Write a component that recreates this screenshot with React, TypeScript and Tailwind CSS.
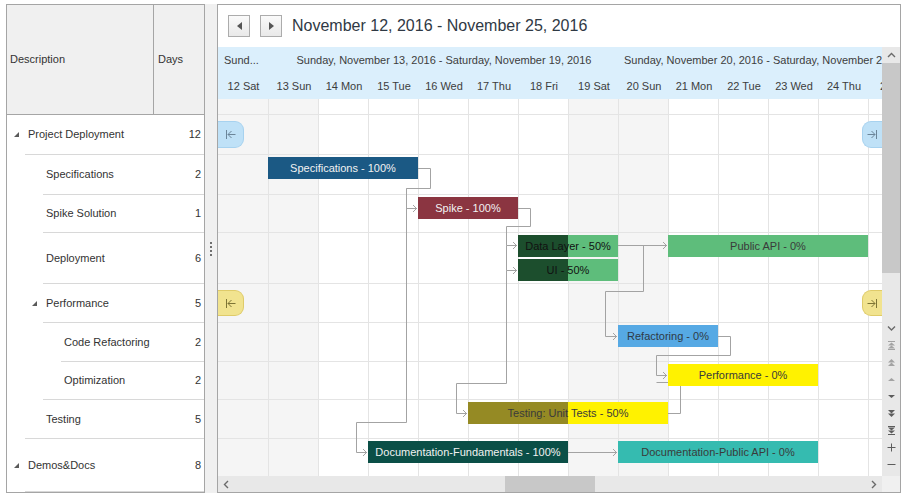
import React from 'react';

type TreeRow = { name: string; days: number; group?: boolean; h: string; pad: string; line: string };

const TREE: TreeRow[] = [
  { name: 'Project Deployment', days: 12, group: true, h: 'h-[40px]', pad: 'pl-[7px]', line: 'ml-[18px]' },
  { name: 'Specifications', days: 2, h: 'h-[40px]', pad: 'pl-[39px]', line: 'ml-[36px]' },
  { name: 'Spike Solution', days: 1, h: 'h-[38px]', pad: 'pl-[39px]', line: 'ml-[36px]' },
  { name: 'Deployment', days: 6, h: 'h-[51px]', pad: 'pl-[39px]', line: 'ml-[36px]' },
  { name: 'Performance', days: 5, group: true, h: 'h-[39px]', pad: 'pl-[25px]', line: 'ml-[36px]' },
  { name: 'Code Refactoring', days: 2, h: 'h-[39px]', pad: 'pl-[57px]', line: 'ml-[54px]' },
  { name: 'Optimization', days: 2, h: 'h-[38px]', pad: 'pl-[57px]', line: 'ml-[36px]' },
  { name: 'Testing', days: 5, h: 'h-[39px]', pad: 'pl-[39px]', line: 'ml-[18px]' },
  { name: 'Demos&Docs', days: 8, group: true, h: 'flex-1', pad: 'pl-[7px]', line: 'ml-[18px]' },
];

const CHART_ROWS = ['h-[16px]', 'h-[40px]', 'h-[40px]', 'h-[38px]', 'h-[51px]', 'h-[39px]', 'h-[39px]', 'h-[38px]', 'h-[39px]'];

const DAYS = [
  { label: '12 Sat', off: true },
  { label: '13 Sun', off: true },
  { label: '14 Mon' },
  { label: '15 Tue' },
  { label: '16 Wed' },
  { label: '17 Thu' },
  { label: '18 Fri' },
  { label: '19 Sat', off: true },
  { label: '20 Sun', off: true },
  { label: '21 Mon' },
  { label: '22 Tue' },
  { label: '23 Wed' },
  { label: '24 Thu' },
  { label: '25 Fri' },
];

type Bar = { text: string; x: number; y: number; w: number; bg: string; fg: string; done?: string };

// absolute page coords, shifted into the chart canvas (origin 218, 99)
const BARS: Bar[] = [
  { text: 'Specifications - 100%', x: 268, y: 157, w: 150, bg: '#1b5984', fg: '#f2f2f2' },
  { text: 'Spike - 100%', x: 418, y: 197, w: 100, bg: '#8b3541', fg: '#f2f2f2' },
  { text: 'Data Layer - 50%', x: 518, y: 235, w: 100, bg: '#5ebd7b', done: '#1c4e2d', fg: '#111111' },
  { text: 'UI - 50%', x: 518, y: 259, w: 100, bg: '#5ebd7b', done: '#1c4e2d', fg: '#111111' },
  { text: 'Public API - 0%', x: 668, y: 235, w: 200, bg: '#5ebd7b', fg: '#3a3a3a' },
  { text: 'Refactoring - 0%', x: 618, y: 325, w: 100, bg: '#56a9e4', fg: '#2f3a46' },
  { text: 'Performance - 0%', x: 668, y: 364, w: 150, bg: '#fff200', fg: '#3a3a3a' },
  { text: 'Testing: Unit Tests - 50%', x: 468, y: 402, w: 200, bg: '#fff200', done: '#958a24', fg: '#3a3a3a' },
  { text: 'Documentation-Fundamentals - 100%', x: 368, y: 441, w: 200, bg: '#0b4f47', fg: '#f2f2f2' },
  { text: 'Documentation-Public API - 0%', x: 618, y: 441, w: 200, bg: '#35bbb0', fg: '#3a3a3a' },
];

const LINKS = [
  'M418 168.5 H430.5 V188.5 H406.5 V208.5 H417',
  'M406.5 188.5 V422.5 H356.5 V452.5 H367',
  'M518 208.5 H530.5 V226.5 H506.5 V245.5 H517',
  'M506.5 245.5 V270.5 H517',
  'M506.5 270.5 V383.5 H456.5 V413.5 H467',
  'M618 245.5 H667',
  'M643.5 245.5 V291.5 H605.5 V336.5 H617',
  'M718 336.5 H730.5 V355.5 H656.5 V375.5 H667',
  'M668 413.5 H680.5 V382.5 H656.5',
  'M568 452.5 H617',
];

const ARROWS: [number, number][] = [
  [418, 208.5], [368, 452.5], [518, 245.5], [518, 270.5], [468, 413.5],
  [668, 245.5], [618, 336.5], [668, 375.5], [618, 452.5],
];

const Tri = () => (
  <svg width="5" height="5" viewBox="0 0 5 5" className="shrink-0">
    <polygon points="5,0 5,5 0,5" fill="#5a5a5a" />
  </svg>
);

const NavBtn = ({ dir }: { dir: 'l' | 'r' }) => (
  <div className="w-[22px] h-[22px] border border-[#acacac] bg-gradient-to-b from-[#fafafa] to-[#e9e9e9] flex items-center justify-center">
    <svg width="5" height="8" viewBox="0 0 5 8">
      {dir === 'l' ? <polygon points="5,0 5,8 0,4" fill="#555" /> : <polygon points="0,0 0,8 5,4" fill="#555" />}
    </svg>
  </div>
);

const GoStart = ({ color }: { color: string }) => (
  <svg width="11" height="9" viewBox="0 0 11 9" fill="none" stroke={color}>
    <path d="M1.5 0 V9" />
    <path d="M3 4.5 H10.5 M6.5 1 L3 4.5 L6.5 8" />
  </svg>
);

const GoEnd = ({ color }: { color: string }) => (
  <svg width="11" height="9" viewBox="0 0 11 9" fill="none" stroke={color}>
    <path d="M9.5 0 V9" />
    <path d="M0.5 4.5 H8 M4.5 1 L8 4.5 L4.5 8" />
  </svg>
);

const Marker = ({ side, top, h, bg, border, icon }: { side: 'l' | 'r'; top: string; h: string; bg: string; border: string; icon: string }) =>
  side === 'l' ? (
    <div className={`absolute left-0 ${top} ${h} w-[26px] rounded-r-[9px] border border-l-0 ${bg} ${border} flex items-center justify-center`}>
      <GoStart color={icon} />
    </div>
  ) : (
    <div className={`absolute left-[644px] ${top} ${h} w-[20px] rounded-l-[9px] border border-r-0 ${bg} ${border} flex items-center justify-center`}>
      <GoEnd color={icon} />
    </div>
  );

const light = '#a3a3a3';
const dark = '#5c5c5c';

const ScrollIcon = ({ kind }: { kind: string }) => {
  const c = ['top', 'pgup', 'up'].includes(kind) ? light : dark;
  return (
    <div className="h-[17px] flex items-center justify-center">
      <svg width="9" height="9" viewBox="0 0 9 9">
        {kind === 'down1' && <polyline points="1,2.5 4.5,6 8,2.5" fill="none" stroke="#6a6a6a" strokeWidth="1.4" />}
        {kind === 'top' && (
          <g fill={c}>
            <rect x="1" y="0" width="7" height="1" />
            <polygon points="4.5,1.5 8,4.5 1,4.5" />
            <polygon points="4.5,4.5 8,7.5 1,7.5" />
            <rect x="1" y="8" width="7" height="1" />
          </g>
        )}
        {kind === 'pgup' && (
          <g fill={c}>
            <polygon points="4.5,1 8,4.5 1,4.5" />
            <polygon points="4.5,4.5 8,8 1,8" />
          </g>
        )}
        {kind === 'up' && <polygon points="4.5,3 8,6 1,6" fill={c} />}
        {kind === 'down' && <polygon points="1,3 8,3 4.5,6" fill={c} />}
        {kind === 'pgdn' && (
          <g fill={c}>
            <polygon points="1,1 8,1 4.5,4.5" />
            <polygon points="1,4.5 8,4.5 4.5,8" />
          </g>
        )}
        {kind === 'bottom' && (
          <g fill={c}>
            <rect x="1" y="0" width="7" height="1" />
            <polygon points="1,1.5 8,1.5 4.5,4.5" />
            <polygon points="1,4.5 8,4.5 4.5,7.5" />
            <rect x="1" y="8" width="7" height="1" />
          </g>
        )}
        {kind === 'plus' && <path d="M0.5 4.5 H8.5 M4.5 0.5 V8.5" stroke={c} />}
        {kind === 'minus' && <path d="M0.5 4.5 H8.5" stroke={c} />}
      </svg>
    </div>
  );
};

const App: React.FC = () => {
  return (
    <div className="w-[906px] h-[501px] bg-white flex items-start pt-[4px] pl-[6px] font-['Liberation_Sans','Arial',sans-serif] text-[11px] text-[#333]">
      {/* Tree list */}
      <div className="w-[199px] h-[489px] border border-[#a5a5a5] flex flex-col shrink-0 bg-white">
        <div className="h-[110px] shrink-0 flex bg-[#f0f0f0] border-b border-[#a5a5a5]">
          <div className="w-[147px] border-r border-[#a5a5a5] flex items-center pl-[3px]">Description</div>
          <div className="flex-1 flex items-center pl-[4px]">Days</div>
        </div>
        {TREE.map((r) => (
          <div key={r.name} className={`flex flex-col shrink-0 ${r.h}`}>
            <div className={`flex-1 flex items-center pr-[3px] ${r.pad}`}>
              {r.group && <Tri />}
              <span className={r.group ? 'ml-[9px]' : ''}>{r.name}</span>
              <span className="ml-auto">{r.days}</span>
            </div>
            <div className={`h-px bg-[#d8d8d8] ${r.line}`} />
          </div>
        ))}
      </div>

      {/* Splitter */}
      <div className="w-[12px] h-[489px] bg-[#f0f0f0] flex flex-col items-center justify-center gap-[2px] shrink-0">
        <div className="w-[2px] h-[2px] bg-[#6e6e6e]" />
        <div className="w-[2px] h-[2px] bg-[#6e6e6e]" />
        <div className="w-[2px] h-[2px] bg-[#6e6e6e]" />
        <div className="w-[2px] h-[2px] bg-[#6e6e6e]" />
      </div>

      {/* Gantt */}
      <div className="w-[684px] h-[489px] border border-[#a5a5a5] flex flex-col shrink-0 bg-white">
        <div className="h-[42px] shrink-0 flex items-center pl-[10px] gap-[10px]">
          <NavBtn dir="l" />
          <NavBtn dir="r" />
          <span className="text-[16px] text-[#2f3944]">November 12, 2016 - November 25, 2016</span>
        </div>

        <div className="flex h-[445px]">
          <div className="w-[664px] flex flex-col">
            {/* Timescale */}
            <div className="h-[52px] bg-[#dbeffc] flex flex-col overflow-hidden text-[#3d3d3d]">
              <div className="h-[26px] flex items-center whitespace-nowrap">
                <div className="w-[51px] shrink-0 pl-[6px]">Sund...</div>
                <div className="w-[350px] shrink-0 text-center">Sunday, November 13, 2016 - Saturday, November 19, 2016</div>
                <div className="shrink-0 pl-[5px]">Sunday, November 20, 2016 - Saturday, November 26, 2016</div>
              </div>
              <div className="h-[26px] flex items-center whitespace-nowrap">
                {DAYS.map((d, i) => (
                  <div key={d.label} className={`shrink-0 text-center ${i === 0 ? 'w-[51px]' : 'w-[50px]'}`}>{d.label}</div>
                ))}
              </div>
            </div>

            {/* Chart canvas */}
            <div className="h-[377px] relative overflow-hidden">
              <div className="flex h-full">
                {DAYS.map((d, i) => (
                  <div
                    key={d.label}
                    className={`shrink-0 h-full border-r border-[#e4e4e4] ${i === 0 ? 'w-[51px]' : 'w-[50px]'} ${d.off ? 'bg-[#f5f5f5]' : 'bg-white'}`}
                  />
                ))}
              </div>
              <div className="absolute inset-0 flex flex-col">
                {CHART_ROWS.map((h, i) => (
                  <div key={i} className={`${h} shrink-0 border-b border-[#e4e4e4]`} />
                ))}
              </div>

              <svg className="absolute left-0 top-0" width="664" height="377">
                <g transform="translate(-218 -99)" fill="none" stroke="#a3a3a3">
                  {LINKS.map((d) => (
                    <path key={d} d={d} />
                  ))}
                  {ARROWS.map(([x, y]) => (
                    <path key={`${x}-${y}`} d={`M${x - 5} ${y - 3.5} L${x - 1.5} ${y} L${x - 5} ${y + 3.5}`} />
                  ))}
                </g>
              </svg>

              {BARS.map((b) => (
                <div
                  key={b.text}
                  className="absolute h-[22px] flex items-center justify-center whitespace-nowrap overflow-hidden"
                  style={{ left: b.x - 218, top: b.y - 99, width: b.w, background: b.bg, color: b.fg }}
                >
                  {b.done && <div className="absolute left-0 top-0 h-full w-1/2" style={{ background: b.done }} />}
                  <span className="relative">{b.text}</span>
                </div>
              ))}

              <Marker side="l" top="top-[22px]" h="h-[27px]" bg="bg-[#bfe1f7]" border="border-[#a7d2ef]" icon="#6b8599" />
              <Marker side="r" top="top-[22px]" h="h-[27px]" bg="bg-[#bfe1f7]" border="border-[#a7d2ef]" icon="#6b8599" />
              <Marker side="l" top="top-[191px]" h="h-[26px]" bg="bg-[#f1e38f]" border="border-[#dfcb69]" icon="#7d7434" />
              <Marker side="r" top="top-[191px]" h="h-[26px]" bg="bg-[#f1e38f]" border="border-[#dfcb69]" icon="#7d7434" />
            </div>

            {/* Horizontal scrollbar */}
            <div className="h-[16px] bg-[#e8e8e8] flex items-center">
              <div className="w-[16px] flex justify-center">
                <svg width="6" height="9" viewBox="0 0 6 9">
                  <polyline points="5,1 1.5,4.5 5,8" fill="none" stroke="#6a6a6a" strokeWidth="1.4" />
                </svg>
              </div>
              <div className="ml-[271px] w-[90px] h-[16px] bg-[#c8c8c8]" />
              <div className="ml-auto w-[16px] flex justify-center">
                <svg width="6" height="9" viewBox="0 0 6 9">
                  <polyline points="1,1 4.5,4.5 1,8" fill="none" stroke="#6a6a6a" strokeWidth="1.4" />
                </svg>
              </div>
            </div>
          </div>

          {/* Vertical scrollbar + navigation */}
          <div className="w-[18px] flex flex-col">
            <div className="h-[429px] bg-[#e8e8e8] flex flex-col">
              <div className="h-[16px] flex items-center justify-center">
                <svg width="9" height="9" viewBox="0 0 9 9">
                  <polyline points="1,6 4.5,2.5 8,6" fill="none" stroke="#6a6a6a" strokeWidth="1.4" />
                </svg>
              </div>
              <div className="h-[210px] bg-[#c8c8c8]" />
              <div className="h-[47px]" />
              <ScrollIcon kind="down1" />
              <ScrollIcon kind="top" />
              <ScrollIcon kind="pgup" />
              <ScrollIcon kind="up" />
              <ScrollIcon kind="down" />
              <ScrollIcon kind="pgdn" />
              <ScrollIcon kind="bottom" />
              <ScrollIcon kind="plus" />
              <ScrollIcon kind="minus" />
            </div>
            <div className="h-[16px] bg-[#f0f0f0]" />
          </div>
        </div>
      </div>
    </div>
  );
};

export default App;
